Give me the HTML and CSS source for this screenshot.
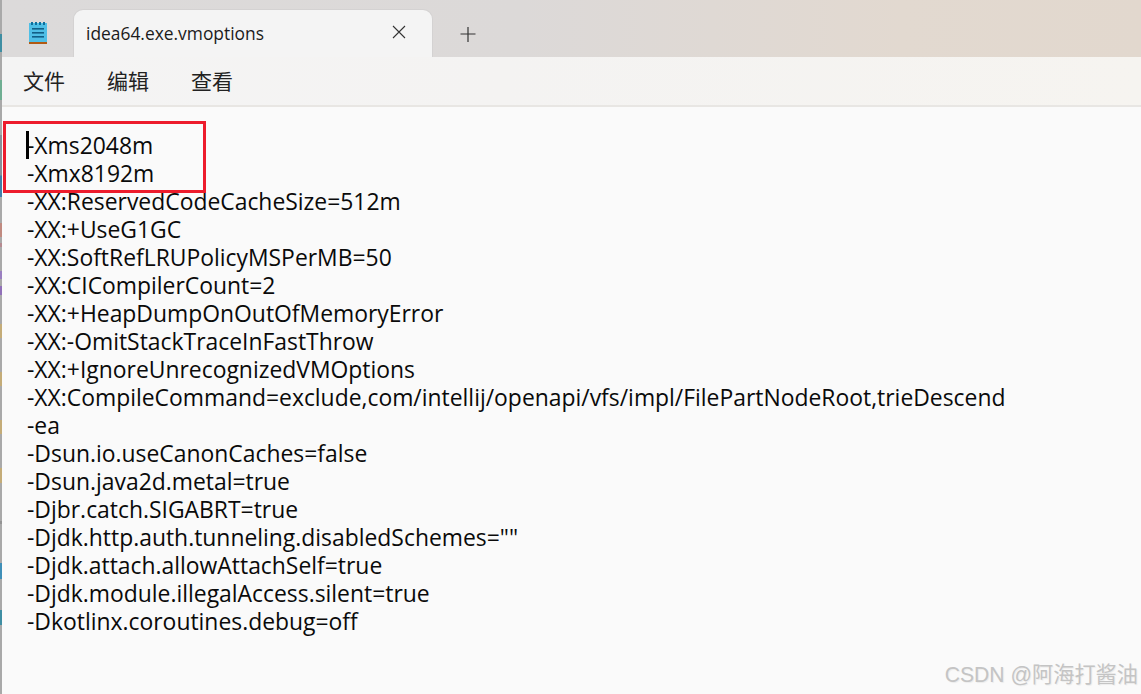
FILE: index.html
```html
<!DOCTYPE html>
<html lang="zh">
<head>
<meta charset="utf-8">
<title>idea64.exe.vmoptions</title>
<link rel="stylesheet" href="styles.css">
</head>
<body>
<div class="strip"></div>
<div class="window">
  <header class="titlebar">
    <div class="app-icon">
      <svg width="20" height="24" viewBox="0 0 20 24">
        <rect x="1" y="2" width="18" height="19" fill="#4fbfe6"/>
        <rect x="3" y="1" width="2" height="3" fill="#0f6f9c"/>
        <rect x="7" y="1" width="2" height="3" fill="#0f6f9c"/>
        <rect x="11" y="1" width="2" height="3" fill="#0f6f9c"/>
        <rect x="15" y="1" width="2" height="3" fill="#0f6f9c"/>
        <rect x="4" y="7" width="12" height="1.6" fill="#125f86"/>
        <rect x="4" y="11" width="12" height="1.6" fill="#125f86"/>
        <rect x="4" y="15" width="12" height="1.6" fill="#125f86"/>
        <rect x="1" y="21" width="18" height="2" fill="#b25a14"/>
      </svg>
    </div>
    <div class="tab">
      <span class="tab-title">idea64.exe.vmoptions</span>
      <svg class="tab-close" width="14" height="14" viewBox="0 0 14 14"><path d="M1 1L13 13M13 1L1 13" stroke="#333" stroke-width="1.1" fill="none"/></svg>
    </div>
    <svg class="tab-add" width="16" height="16" viewBox="0 0 16 16"><path d="M8 1V16M0.5 8H15.5" stroke="#333" stroke-width="1.2" fill="none"/></svg>
  </header>
  <nav class="menu">
    <span class="menu-item">文件</span>
    <span class="menu-item">编辑</span>
    <span class="menu-item">查看</span>
  </nav>
  <main class="editor">
    <div class="selection-box"></div>
    <div class="caret"></div>
    <pre class="text">-Xms2048m
-Xmx8192m
-XX:ReservedCodeCacheSize=512m
-XX:+UseG1GC
-XX:SoftRefLRUPolicyMSPerMB=50
-XX:CICompilerCount=2
-XX:+HeapDumpOnOutOfMemoryError
-XX:-OmitStackTraceInFastThrow
-XX:+IgnoreUnrecognizedVMOptions
-XX:CompileCommand=exclude,com/intellij/openapi/vfs/impl/FilePartNodeRoot,trieDescend
-ea
-Dsun.io.useCanonCaches=false
-Dsun.java2d.metal=true
-Djbr.catch.SIGABRT=true
-Djdk.http.auth.tunneling.disabledSchemes=""
-Djdk.attach.allowAttachSelf=true
-Djdk.module.illegalAccess.silent=true
-Dkotlinx.coroutines.debug=off</pre>
    <div class="watermark">CSDN @阿海打酱油</div>
  </main>
</div>
</body>
</html>
```
FILE: styles.css
```css
html, body {
  margin: 0;
  height: 100%;
  overflow: hidden;
}
body {
  display: flex;
  width: 1141px;
  height: 694px;
  font-family: "Open Sans", "Noto Sans CJK SC", sans-serif;
  background: #fafafa;
}
.strip {
  width: 2px;
  flex: none;
  background: linear-gradient(to bottom,
    #a9a9a9 0 34px, #3f8ea3 34px 52px, #a9a9a9 52px 80px, #6fae92 80px 100px, #a9a9a9 100px 135px,
    #8a8f98 135px 175px, #3f7fa8 176px 197px, #a9a9a9 197px 223px,
    #c08a80 223px 237px, #a9a9a9 237px 243px, #b58a90 243px 247px, #a9a9a9 247px 271px,
    #9a7fc0 271px 279px, #a9a9a9 279px 286px, #9070b8 286px 295px, #a9a9a9 295px 324px,
    #c4ac78 324px 338px, #a9a9a9 338px 372px, #c4ac78 372px 386px, #a9a9a9 386px 420px,
    #c4ac78 420px 434px, #a9a9a9 434px 468px, #c4ac78 468px 483px, #a9a9a9 483px 521px,
    #949494 521px 524px, #a9a9a9 524px 563px, #3f8fb8 563px 579px, #a9a9a9 579px 610px,
    #3f8ea3 610px 625px, #a9a9a9 625px);
}
.window {
  flex: 1;
  display: flex;
  flex-direction: column;
  min-width: 0;
}
.titlebar {
  height: 57px;
  flex: none;
  display: flex;
  align-items: flex-end;
  background: linear-gradient(to right, #dcdada 0, #dcd9d8 520px, #e2d9d0 900px, #e2d8ce 100%);
}
.app-icon {
  width: 72px;
  height: 56px;
  box-sizing: border-box;
  padding: 20px 0 0 26px;
  flex: none;
}
.app-icon svg {
  display: block;
}
.tab {
  width: 358px;
  height: 47px;
  box-sizing: border-box;
  display: flex;
  align-items: center;
  justify-content: space-between;
  padding: 0 26px 0 12px;
  background: #f4f4f4;
  border-radius: 9px 9px 0 0;
  box-shadow: 0 0 0 1px #d4d2d2;
  clip-path: inset(-1px -1px 0 -1px);
  flex: none;
}
.tab-title {
  font-size: 17.4px;
  color: #1b1b1b;
  padding-bottom: 1px;
}
.tab-close {
  margin-bottom: 4px;
}
.tab-add {
  margin: 0 0 15px 28px;
  flex: none;
}
.menu {
  height: 50px;
  flex: none;
  display: flex;
  align-items: center;
  gap: 42px;
  padding: 0 0 2px 21px;
  background: linear-gradient(to right, #f4f4f4 0, #f4f3f2 500px, #f6f4f0 100%);
  border-bottom: 2px solid #e8e6e3;
  box-sizing: border-box;
}
.menu-item {
  font-size: 21px;
  color: #222;
  font-family: "Noto Sans CJK SC", sans-serif;
}
.editor {
  flex: 1;
  position: relative;
  min-height: 0;
  background: #fafafa;
  padding: 25px 0 0 25px;
}
.text {
  margin: 0;
  font-family: "Open Sans", sans-serif;
  font-size: 22.9px;
  line-height: 28px;
  color: #0a0a0a;
  white-space: pre;
}
.caret {
  position: absolute;
  left: 24px;
  top: 24px;
  width: 3px;
  height: 28px;
  background: #000;
}
.selection-box {
  position: absolute;
  left: 1px;
  top: 14px;
  width: 197px;
  height: 66px;
  border: 3px solid #ed1c2c;
  pointer-events: none;
}
.watermark {
  position: absolute;
  right: 3px;
  bottom: 6px;
  font-family: "Liberation Sans", "Noto Sans CJK SC", sans-serif;
  font-size: 21.2px;
  color: #c4c4c4;
  text-shadow: 1px 1px 1px rgba(0, 0, 0, 0.06);
}
```
